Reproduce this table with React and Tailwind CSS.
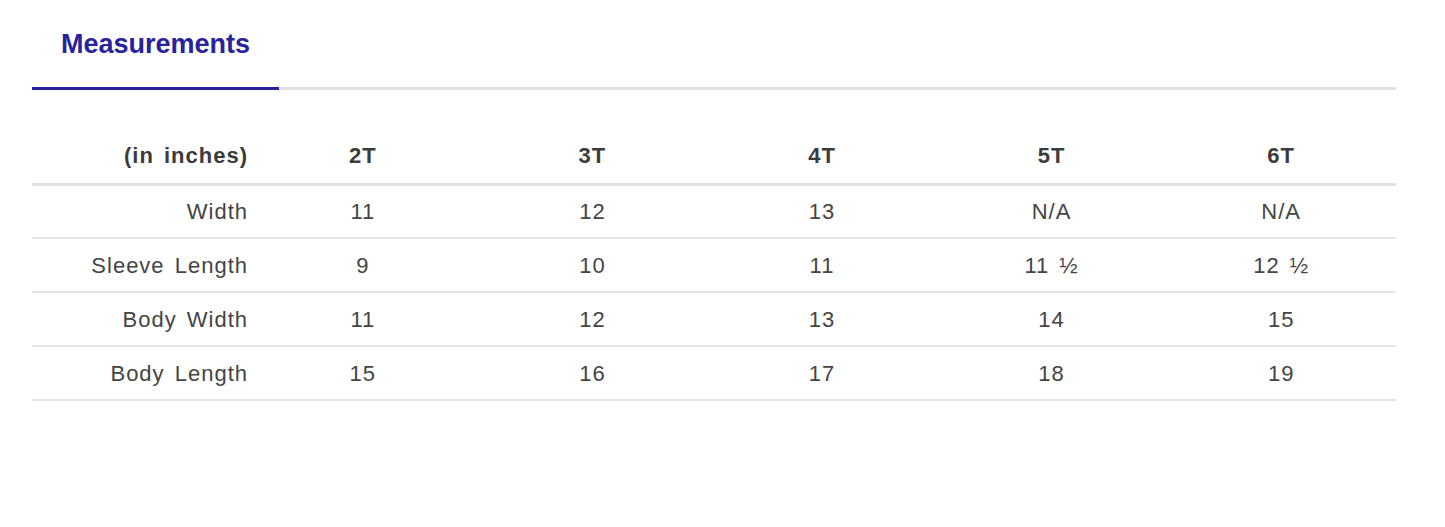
const SIZES = ['2T', '3T', '4T', '5T', '6T']

const ROWS = [
  { label: 'Width', values: ['11', '12', '13', 'N/A', 'N/A'] },
  { label: 'Sleeve Length', values: ['9', '10', '11', '11 ½', '12 ½'] },
  { label: 'Body Width', values: ['11', '12', '13', '14', '15'] },
  { label: 'Body Length', values: ['15', '16', '17', '18', '19'] },
]

export default function App() {
  return (
    <div className="min-h-[527px] w-full bg-white px-[32px] pr-[49px]" style={{ fontFamily: '"Liberation Sans", Arial, sans-serif' }}>

      {/* Tabs */}
      <div className="flex border-b-[3px] border-[#e1e1e5]">
        <button className="-mb-[3px] flex h-[90px] w-[247px] items-center justify-center border-b-[3px] border-[#27239c] pt-[1px] text-[27px] font-bold text-[#27239c]">
          Measurements
        </button>
      </div>

      {/* Size chart */}
      <table className="mt-[36px] w-full table-fixed border-collapse text-[22px] tracking-[1px] text-[#444] [word-spacing:3px]">
        <colgroup>
          <col className="w-[216px]" />
          {SIZES.map(s => <col key={s} />)}
        </colgroup>
        <thead>
          <tr className="h-[58px] border-b-[3px] border-[#e1e1e5]">
            <th className="pt-[2px] text-right font-bold text-[#3b3b3b]">(in inches)</th>
            {SIZES.map(s => (
              <th key={s} className="pt-[2px] text-center font-bold text-[#3b3b3b]">{s}</th>
            ))}
          </tr>
        </thead>
        <tbody>
          {ROWS.map(r => (
            <tr key={r.label} className="h-[54px] border-b-2 border-[#e4e4e7]">
              <td className="text-right">{r.label}</td>
              {r.values.map((v, i) => (
                <td key={i} className="text-center">{v}</td>
              ))}
            </tr>
          ))}
        </tbody>
      </table>
    </div>
  )
}
